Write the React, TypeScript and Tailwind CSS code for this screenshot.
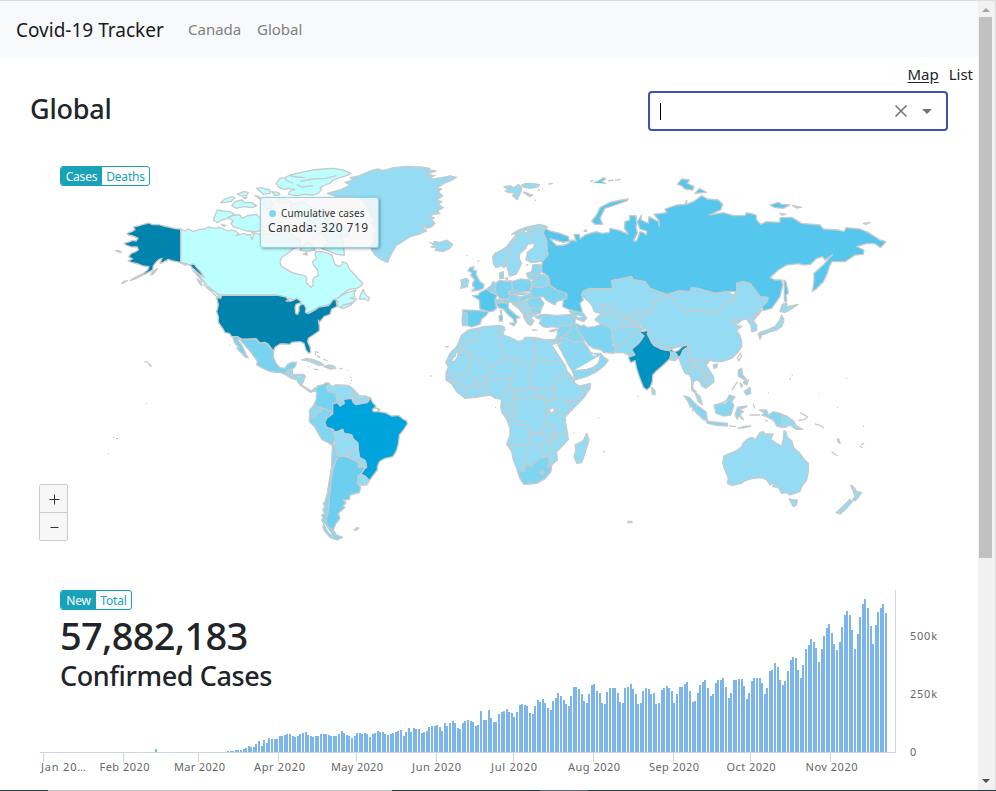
import React from "react";

const LIGHT = "#95dbf4";
const RUSSIA = "#55c7ee";
const CANADA = "#bdffff";
const USA = "#0084ae";

type Shape = [fill: string, d: string];
type Region = { name: string; x: number; y: number; shapes: Shape[] };

const regions: Region[] = [
  {
    name: "alaska-canada",
    x: 100,
    y: 155,
    shapes: [
      [CANADA, "M242 222L255 228 265 222 280 230 295 224 315 222 325 216 335 218 350 221 356 217 365 220 385 228 395 225 410 230 415 236 408 242 430 236 445 240 452 238 455 254 462 240 455 232 470 235 480 238 500 235 520 240 535 240 550 225 545 215 560 225 575 240 590 250 600 255 600 275 580 280 570 290 555 300 545 308 540 320 543 333 560 343 575 352 595 358 615 362 620 370 618 382 628 392 633 398 640 390 638 378 642 368 655 362 653 345 640 330 638 320 650 310 645 300 647 290 665 290 685 295 697 302 700 315 705 328 715 334 725 330 728 320 740 325 750 345 765 360 775 372 788 385 785 392 770 400 750 403 740 408 726 418 712 430 735 415 768 405 762 415 765 425 750 430 770 432 762 440 750 445 732 453 720 458 712 448 715 440 705 432 698 437 690 447 678 452 660 455 640 465 625 472 617 475 615 460 605 450 595 440 580 436 570 430 555 433 545 424 530 420 360 420 345 412 335 403 322 392 310 378 300 365 290 345 275 333 258 326 242 323Z"],
      [USA, "M81 235L97 229 105 224 100 216 118 212 130 208 146 204 158 209 175 208 190 213 210 217 225 221 242 222V323L262 327 258 331 240 322 215 317 205 313 196 318 190 322 180 325 186 310 176 314 168 322 160 332 158 345 145 352 125 362 105 372 90 377 110 365 130 355 143 345 147 335 130 333 115 327 95 322 84 318 98 312 86 305 94 295 105 291 115 285 112 276 95 276 78 270 72 265 90 260 98 256 108 258 114 250 100 243 85 240Z"],
      [USA, "M270 329L282 327 292 340 303 352 312 367 302 360 290 350 276 338Z"],
      ["#9ccbdc", "M46 288L56 287 64 292 56 291ZM65 386L72 379 82 377 73 382ZM152 360L158 350 172 340 168 348 158 358ZM276 346L284 352 295 358 303 372M292 372L300 378 306 392 298 384Z"],
      ["none", "M284 346L292 356 302 364M290 360L300 370 308 382M302 382L304 390M310 386L320 398 330 405"],
      [CANADA, "M322 398L345 410 362 428 350 425ZM352 165L345 180 340 195 352 203 365 195 385 190 402 177 390 170 370 168ZM383 188L400 180 420 180 425 190 440 183 455 180 470 178 485 195 490 225 465 230 440 228 420 222 400 215 393 205 400 198ZM362 143L375 132 395 125 405 128 395 138 380 142ZM395 152L405 140 425 135 435 143 455 143 470 152 455 158 430 155 410 160ZM412 118L430 110 445 112 440 122 425 123ZM470 100L485 98 510 105 510 115 490 118 478 108ZM515 110L535 112 540 118 525 122ZM465 122L478 125 480 132ZM365 208L378 212 370 214ZM430 128L441 127 437 131Z"],
    ],
  },
  {
    name: "north-atlantic",
    x: 250,
    y: 155,
    shapes: [
      [CANADA, "M78 85L90 70 105 68 120 60 140 55 165 50 190 45 220 42 250 40 280 45 303 55 290 62 270 68 250 75 240 85 225 90 210 98 215 103 205 115 190 120 165 118 140 122 115 118 120 108 135 103 115 100 105 104 88 98Z"],
      ["none", "M120 62L140 66 165 68M150 80L185 72 225 70 260 62M140 88L155 96 190 92M105 70L112 78 130 85"],
      [CANADA, "M120 150L160 140 190 160 220 170 250 195 275 215 300 225 290 245 270 240 280 260 283 300 260 298 240 290 215 280 235 265 230 250 215 235 190 225 170 215 150 200ZM150 285L160 270 175 262 190 275 195 285 170 289ZM160 298L170 292 172 300ZM30 130L60 128 70 150 50 165ZM80 130L110 134 125 142 90 145Z"],
      [LIGHT, "M232 115L250 110 270 105 285 98 300 90 285 82 310 75 300 68 330 62 360 48 385 42 400 47 430 38 470 34 510 36 540 40 530 44 558 48 530 58 555 62 540 66 550 72 575 68 600 63 620 67 600 78 585 84 575 90 560 100 575 102 565 110 578 123 560 135 575 140 565 148 580 158 562 168 570 176 550 178 540 185 553 188 545 195 555 205 545 215 530 220 515 208 520 218 530 228 505 238 480 245 455 262 440 270 428 290 418 310 413 322 395 315 375 300 365 285 362 270 372 255 370 240 380 225 365 205 375 195 360 180 355 160 345 145 330 130 300 125 260 125Z"],
      [LIGHT, "M540 262L548 268 552 260 572 262 590 255 608 268 600 280 578 290 555 285 560 277 543 276 555 270Z"],
      [CANADA, "M340 403L332 418 328 432 345 432 355 438 358 428 350 422 343 415ZM272 458L280 450 300 446 312 440 300 452 276 461Z"],
    ],
  },
  {
    name: "usa-caribbean",
    x: 200,
    y: 285,
    shapes: [
      [USA, "M50 38L62 40 65 31H235L258 36 265 44 258 48 275 48 290 40 304 50 298 55 288 58 285 68 287 85 293 88 297 78 297 64 305 57 313 60 318 70 316 82 325 86 345 75 358 66 385 62 392 55 398 45 408 43 410 58 412 64 395 72 390 88 372 95 358 112 355 105 358 125 358 137 340 150 325 160 323 170 330 185 332 202 326 205 318 195 312 175 300 170 275 172 270 178 258 177 240 177 225 187 221 198 213 190 205 178 193 172 180 175 170 163 125 163 112 155 95 155 88 145 75 143 68 130 55 112 55 95 50 80 55 60Z"],
      ["#7ad2f1", "M98 155H112L125 163 168 161 180 175 193 172 205 178 213 190 221 198 220 215 228 235 240 248 255 250 263 238 275 232 290 232 285 245 277 252 265 254 258 262 255 268 240 262 225 262 205 258 185 248 170 240 172 228 160 212 150 198 138 185 125 170 118 162 113 165 125 180 132 195 138 208 145 218 138 218 125 205 118 198 110 188 118 188 105 175Z"],
      [LIGHT, "M255 268L262 260 265 255 277 254 277 268 290 268 310 268 316 274 310 290 305 300 312 305 325 312 335 318 345 308 354 315 345 318 330 322 318 312 300 300 290 285 275 280ZM262 266L275 272M275 278L300 276 310 272M298 298L308 300M322 308L320 314"],
      ["#a5d9ea", "M305 225L320 220 340 224 360 232 372 240 355 241 340 234 320 226ZM372 245L385 240 400 242 408 250 390 252ZM386 241V252"],
      ["none", "M343 252L355 254M418 250L428 251M345 210L347 200 356 203M350 212L360 218M370 222L384 228M443 255L444 257M450 266L451 268M452 276L453 279M455 284L454 288M452 293L452 296M88 179L90 181M324 244L328 245"],
    ],
  },
  {
    name: "south-america",
    x: 290,
    y: 370,
    shapes: [
      ["#75d3f1", "M82 48L97 45 110 38 118 40 110 52 115 65 138 72 142 98 128 102V132L118 122 100 118 90 112 72 105 78 90 80 70 76 58Z"],
      ["#80d5f2", "M58 142L60 138 72 142 80 130 95 122 90 112 118 122 128 132 110 145 104 158 110 172 130 178 132 190 135 205 128 228 115 218 95 208 85 190 72 168 58 155Z"],
      ["#8cd9f3", "M72 105L90 112 95 122 80 130 72 142 60 138 58 122Z"],
      [LIGHT, "M110 52L118 40 122 46 130 50 135 45 150 45 175 46 188 55 186 65 192 72 185 85 170 90 160 88 163 100 150 108 142 98 138 72 115 65ZM188 55L200 68 208 78 205 90 210 100 198 104 190 98 192 72ZM208 78H228L232 98 210 100 205 90ZM228 78L242 84 235 98H232Z"],
      ["#00a4dc", "M128 132V102L142 98 150 108 163 100 160 88 185 85 190 98 198 104 232 98 242 84 248 98 258 108 250 118 256 114 270 118 265 125 285 128 305 138 325 136 340 148 350 152 352 162 340 180 328 195 325 222 318 245 308 260 285 265 268 275 262 290 262 300 248 318 238 332 225 318 212 312 222 298 230 292 228 280 225 272 208 262 205 240 203 218 190 208 185 195 162 190 158 178 145 184 132 186 130 178 110 172 104 158 110 145Z"],
      ["#fff", "M247 118L255 114 266 118 262 125 250 125Z"],
      [LIGHT, "M132 186L145 184 158 178 162 190 185 195 190 208 203 218 205 240H180L175 255 160 258 145 260 138 245 135 225 135 205ZM180 240H205L208 262 225 272 228 290 210 292 205 278 175 262V255ZM205 315L212 312 225 318 238 332 230 345H212L202 340Z"],
      ["#6ccfef", "M145 260L160 258 175 262 205 278 205 292H228L222 298 212 312 205 315 202 340 212 352 208 368 180 375 178 388 160 390 168 398 158 408 165 412 150 425 145 430 150 445 138 460 132 475 130 480 112 470 108 450 115 420 118 380 122 340 128 300 138 270Z"],
      ["#8cd5ee", "M128 228L135 225 138 245 145 260 138 270 128 300 122 340 118 380 115 420 108 450 112 470 130 480 140 495 158 502 140 510 120 502 105 485 98 470 102 462 95 450 100 444 95 435 105 430 98 418 105 412 100 400 105 395 112 370 118 330 125 290 126 250ZM100 455L105 470 115 488 130 500M128 482L138 498"],
      ["#a9cfdf", "M192 480L200 473 206 474 200 480Z"],
    ],
  },
  {
    name: "europe",
    x: 440,
    y: 165,
    shapes: [
      [LIGHT, "M192 65L210 62 222 68 235 58 245 68 243 80 232 104 218 92 225 84 205 82 195 78 205 74ZM245 60L255 56 270 55 298 58 295 65 270 70 250 66ZM250 82L262 84 270 88 278 90 270 95ZM284 105L288 107M294 75L300 76M306 72L310 73M325 57L338 56"],
      [LIGHT, "M158 275L165 265 185 255 200 245 215 225 232 205 215 208 235 195 265 185 300 178 322 185 318 190 300 187 285 200 265 195 245 198 232 210 222 225 215 245 205 258 203 275 200 300 192 308 185 302 168 308 160 295Z"],
      [LIGHT, "M203 275L205 258 215 245 222 225 232 210 245 198 262 205 275 210 278 235 262 238 258 250 240 265 237 280 245 295 238 310 228 328 208 333 200 300ZM262 205L265 195 285 200 300 187 315 190 310 205 320 225 322 260 325 268 308 288 275 293 258 285 262 262 280 248 285 238 278 235 275 210Z"],
      ["#62ccef", "M90 308L102 305 98 315 110 318 108 328 120 350 132 358 130 370 118 375 95 378 105 368 98 364 98 355 104 345 92 330 96 322 84 318Z"],
      [LIGHT, "M62 345L78 340 86 345 82 365 62 370 66 358ZM114 292L117 286M80 270L82 272"],
      ["#55c7ed", "M97 392L115 390 120 382 140 372 150 380 172 390 165 405 170 430 160 438 145 440 120 432 118 405Z"],
      ["#65cdef", "M68 435L120 437 145 440 140 450 125 462 120 478 95 486 82 482V445L68 443Z"],
      ["#8bd6f0", "M68 443L82 445V482H68L66 465ZM140 372L155 360 158 350 168 355 165 378 172 390 150 380Z"],
      ["#78d2f0", "M168 355L180 345 190 348 215 348 218 375 205 385 215 395 205 402H180L172 390 165 378Z"],
      ["#8bd8f2", "M178 325L190 320V340H180ZM195 340L204 338 202 344ZM260 325L275 320 278 300 300 298 305 320 295 330 285 342H270L262 335ZM262 325L290 330M258 300L265 300M285 342L295 330 310 328 325 340 328 360 305 368 278 365 275 350Z"],
      ["#7dd4f1", "M215 350L240 342 270 345 275 360 270 378 240 382 218 375ZM278 365L305 368 328 360 350 375 380 385V400L350 410 345 420 330 412 318 405 310 395 275 398 270 380Z"],
      ["#84d6f1", "M205 380L225 375 242 382 225 392 212 388ZM180 402H205L212 390 240 384 270 385 275 398 262 402 240 412 215 412 190 412ZM225 392L240 396 270 388M238 395L235 412M165 405L188 402 185 412 168 415ZM258 410L275 398H300L312 415 305 430 270 428ZM270 428L305 430 300 445H275Z"],
      [LIGHT, "M215 412H240L258 408 270 428 275 445 262 452 256 462 250 448 235 430 218 418ZM225 418L245 420 248 445M245 430L265 432M250 448L268 445M250 455L275 448H290L272 458 282 468 272 482 262 475ZM262 474L278 470M275 495L292 496M328 498L350 492 342 500Z"],
      ["#66ccee", "M168 415L190 412 205 415 205 430 225 448 240 458 228 460 230 470 225 478 220 462 205 450 190 432 175 428ZM208 475L225 473 222 483ZM178 452L187 450V468H178ZM180 438L185 436 184 448Z"],
      ["#8cd7f1", "M295 455L300 450 320 448 350 452 390 448 405 460V478L370 482 355 488 340 485 320 487 310 485 298 475 303 465ZM295 462L285 455 298 450ZM388 438L430 445 440 460 430 470 405 460ZM405 450L415 460 430 455"],
    ],
  },
  {
    name: "africa-middle-east",
    x: 430,
    y: 310,
    shapes: [
      [LIGHT, "M122 58L140 55 160 50 208 46 222 50 225 60 218 68 222 75 240 82 265 95 280 90 285 82 312 82 345 90 372 88 378 100 365 105 385 135 405 165 412 185 430 205 435 220 450 228 482 220 480 235 460 265 440 285 418 308 405 322 408 345 412 368 415 388 400 405 380 425 382 450 365 465 362 485 345 505 320 520 282 523 270 505 262 480 250 450 245 425 230 402 240 375V355L230 328 215 305 212 288 215 268 195 265 182 255 160 258 140 262 105 265 80 245 65 222 48 210V190L55 170 47 158 60 130 80 110 95 75 112 62Z"],
      ["#7fd4f0", "M262 480L282 485 288 462 300 470 330 445 355 440 358 460 365 465 362 485 345 505 320 520 282 523 270 505Z"],
      ["none", "M98 118V102L140 88 147 68 140 55M98 105L80 108M98 118L112 125 180 172 190 168 222 145 215 110 205 80 208 46M215 85L222 75M115 130L118 190 75 200 48 190M60 155L75 140 80 122H98M180 172L182 190 165 205M222 145H250L258 148 305 168M314 82V152H390M314 152L312 165 305 168 300 205 305 232M258 148L250 190 242 210 245 235 250 245 285 238 305 232M180 210L230 205 242 210M240 222L225 245 212 262M172 212L175 235 182 255M160 222L165 258M140 225L138 262M182 190L165 200 140 205 130 225 105 232 90 215 75 218 48 205M105 232L105 265M75 235L95 228M48 212H70M135 222H160L172 212M305 225L320 235 350 238 375 235 372 215 385 198 400 195 430 215M372 220L370 245 380 265 405 272 440 268 470 235 450 228M440 268L418 275V308M370 297L405 322M345 300L350 275 375 268M250 272L265 265 285 265 320 262 350 272 345 300 345 320 350 345 340 350V372L325 368 295 365V345H265L262 332 235 330M215 283H245L250 272 245 245M245 283L248 310 230 318M262 268L258 320 238 322M295 345L298 405H230M298 405L330 408 355 390 375 385 370 365 375 350 350 345M290 410L288 462M282 485L285 462M325 408L345 440 358 440 365 410 355 390M375 370L412 368M372 365L383 395 376 390M285 238L265 245 250 268M305 232L325 258 350 265 375 260M298 365L298 380 325 368M355 390V375L340 372M230 290V308H215M345 300L350 320"],
      ["#fff", "M358 298L372 292V305L362 310ZM65 155L68 145 75 140 78 128 98 122 98 125 85 128 82 142 72 155Z"],
      [LIGHT, "M330 487L337 480 344 487 337 494ZM352 465L358 460 362 468 356 472ZM435 405L460 392 470 370 477 390 465 430 455 458 440 460 432 440 438 420Z"],
      ["#8ad8f2", "M380 90L405 82 430 95H460L472 110 480 125 488 130 512 130 520 140 535 150 525 165 500 185 470 200 435 210 428 185 415 165 395 125 385 108ZM430 182L470 178 490 172 505 160 512 135M490 172L498 185M378 108L388 105 400 92M480 125L488 138 505 140"],
      ["#88d7f1", "M382 60L390 48 415 46 440 42 442 58 450 70 460 85 462 96H430L405 82 380 90 378 100 374 92 382 75ZM425 48L418 68 390 82"],
      ["#7fd5f1", "M440 42L455 48 462 45 470 52 495 50 515 42 540 48 548 65 545 80 550 100 558 118 550 130 520 127 515 120 490 115 475 105 468 95 460 85 450 70 442 58Z"],
      ["#a9cfdf", "M45 110L57 111M0 198H5M195 292L198 293M507 322V325M430 368L433 369M520 424L523 426"],
    ],
  },
  {
    name: "russia-east-asia",
    x: 590,
    y: 165,
    shapes: [
      [RUSSIA, "M-135 190L-120 198-90 205-65 215-62 228-80 232-105 225-120 220-110 232-100 242-75 240-65 235-55 225-42 228-48 208-32 208-30 222-15 210 0 205 20 200 35 205 58 203 60 190 90 197 115 208 103 190 105 170 120 165 118 152 138 152 140 175 138 185 142 205 130 228 140 228 150 200 158 202 170 210 170 198 150 192 142 170 155 150 153 165 175 175 177 155 190 162 205 170 208 184 207 166 192 148 230 143 225 132 260 120 285 118 290 106 290 118 310 110 335 92 352 102 385 105 398 118 392 135 380 140 358 150 400 143 430 152 465 152 470 143 498 150 500 165 512 178 530 170 570 172V158L605 157 635 175 690 180 700 192 745 195 762 200 768 188 810 192 835 203 870 225 888 230 872 248 855 236 830 235 800 245 822 255 820 268 795 270 765 290 725 290 718 305 712 325 700 350 678 372 667 379 672 350V325L700 300 728 268 705 285 698 275 680 280 662 298 640 300 625 296 590 300 565 315 540 338 555 345 575 345 578 360 570 395 545 430 520 437 515 425 530 412 535 398 510 395 495 375 480 355 460 350 440 355V380L410 380 375 385 330 372 305 368 300 380 265 378 232 388 205 380 180 370 165 350 130 345 125 335 65 347 68 372 40 372 0 370-20 378-25 390-20 405-30 415-22 445-40 440-60 435-82 425-80 405-70 400V385L-100 375-120 360-122 345-125 335-145 320V300L-142 288-125 268-128 260-130 225-140 205Z"],
      [RUSSIA, "M5 168L20 150 30 128 60 112 95 105 115 102 110 108 75 120 45 130 35 150 30 160 38 178 15 178ZM262 58L275 42 298 45 292 55 312 65 308 75 285 72 275 62ZM315 85L328 70 350 82ZM540 120L565 112 575 118 600 120 580 130 555 128ZM608 122L635 127 620 129ZM570 145L588 148 575 150ZM820 175L840 172 828 178ZM582 345L588 350 595 385 588 390 590 408 583 408V380ZM-10 200L-18 198-14 194ZM0 50L10 46M10 53L25 48 40 38 48 42 35 50 48 56M55 48L70 45M75 46L92 43M584 418L588 412 592 420"],
      [LIGHT, "M-25 390L-20 378 0 372 40 372 68 372 65 347 125 335 130 345 165 350 180 370 205 380 232 388 225 397 190 405V430L180 442 140 440 118 452 105 460 85 440 62 435 60 425 35 420 32 445 12 440 8 425 -2 412-10 405Z"],
      [LIGHT, "M232 388L265 378 300 380 305 368 330 372 375 385 410 380 430 390 440 405 415 410 400 425 375 445H345L290 438 260 420 255 405Z"],
      [LIGHT, "M232 388L255 405 260 420 290 438H345L375 445 400 425 415 410 440 405 430 390 440 380V355L460 350 480 355 495 375 510 395 535 398 530 412 515 425 510 440 475 460 455 465 445 475 430 470 445 460 428 467 440 480 455 485 440 495 450 512 455 530 455 545 442 565 425 580 395 590 375 590 360 585 350 583 320 590 300 580 292 560 298 545 275 543 240 552 220 550 190 535 180 528 178 513 170 495 150 480 135 470 150 455 180 442 190 430V405L225 397Z"],
      [LIGHT, "M470 462L490 455 510 440 515 437 500 455 490 468 500 480V497L485 500 482 480 475 470ZM480 472L495 470M575 422L582 415 592 425 625 418 600 435 585 442 570 440ZM575 450L582 465 575 485 560 495 535 502 515 510 508 503 530 495 555 485 570 465ZM505 505L515 512 510 523ZM522 508L535 503"],
    ],
  },
  {
    name: "south-asia-oceania",
    x: 600,
    y: 300,
    shapes: [
      [LIGHT, "M-15 60L-5 48 0 45 12 42 35 45 60 60 75 78 65 80 35 90 25 78 0 70ZM5 15L30 20 32 30 55 35 75 55 85 58 95 62 90 82 75 78 60 60 35 45 12 42 2 40ZM75 55L90 45 110 35 150 37 130 52 105 65 90 60ZM95 62L105 65 115 72 120 85 90 82ZM82 52L100 50 108 56"],
      ["#90daf3", "M35 90L65 80 90 82 115 80 100 98 85 115 60 140 38 135V110ZM38 135L60 140 85 115 100 98 115 80 135 85 125 92 120 100 132 108 118 128 95 148 105 165 90 172 85 165 70 158H40L48 145Z"],
      ["#0092c1", "M118 95L145 92 142 102 150 118 155 128 165 138 190 148 210 152 212 145 222 155 235 152 248 138 265 135 262 142 250 150 242 168 235 172 228 160 215 158 208 178 190 195 170 212 158 225 157 245 150 262 140 270 130 262 118 230 110 205 105 182 92 188 85 172 105 165 95 148 118 128 132 108Z"],
      [LIGHT, "M158 122L180 132 208 145V152L185 148 160 135ZM212 155L228 160 232 175 225 182 212 180ZM155 262L165 272V284L157 284ZM235 172L242 168 250 150 265 142 270 175 285 185 272 205 278 240 268 225 255 220 248 205Z"],
      [LIGHT, "M270 178L285 190 300 182 320 178 330 182 318 195 340 228 342 245 318 265 305 258 300 245 290 240 280 245 278 262 285 275 300 290 308 315 295 305 285 278 275 270V245L270 215ZM285 190L295 200 310 205 325 235M272 205L285 198M285 205L305 215 328 235 300 235M300 240L328 236 320 250M278 268L290 275"],
      ["#8bd7f1", "M340 195L352 192 350 203 342 205ZM415 210L425 205 428 225 440 240 430 238 415 228ZM430 245L445 240 440 255 432 250ZM420 248L428 256 424 262ZM432 275L442 268 450 262 452 280 440 285ZM395 270L404 258 412 245"],
      ["#fff", "M412 172L422 160 424 170 416 183Z"],
      ["#84d7f2", "M252 288L268 292 290 315 318 335 322 358 312 360 290 340 275 320 262 302ZM318 362L335 365 360 368 382 370V378L350 376 322 370ZM342 315L362 312 380 300 388 285 405 290 395 305 402 315 392 345 370 348 348 340ZM342 316L375 310 388 298 404 292M412 322L440 318 438 322 418 328 430 335 420 342 430 358 424 356 418 345 412 358 405 345 410 330ZM388 378L408 380M412 386L430 380 452 378 425 385M478 330L500 330 505 345 520 335 545 342V382L530 378 522 362 505 352 485 345 495 340ZM266 310L272 324M276 328L280 334"],
      [LIGHT, "M545 342L560 348 580 362 590 378 608 388 590 388 570 375 555 382H545Z"],
      ["none", "M595 362L615 358 622 350 600 338M645 372L660 376 672 385M712 418L716 416 720 430 715 428ZM695 455L712 468M778 438L788 443M783 434L793 429M460 312L464 325M448 345L480 345M495 362L503 363M84 664H96V668H84ZM112 289L116 290M9 455L13 456M568 238L571 239M575 226L578 227M504 277L506 278M655 280L657 281"],
      [LIGHT, "M372 468L385 462 410 452 425 440 430 428 445 415 458 412 465 420 475 405 480 397 490 395 495 402 520 402 512 418 530 430 545 438 550 415 552 392 558 395 562 412 575 422 582 445 600 460 612 478 625 490V515L620 540 605 560 600 575 585 580 570 585 560 578 545 580 535 562 518 560 525 545 510 555 500 540 485 533 460 535 435 542 425 550 395 556 382 550 385 535 375 510 368 490ZM567 597L580 600 592 600 590 615 580 620ZM752 555L762 562 770 575 785 577 775 592 765 603 758 600 765 588ZM750 598L757 605 740 625 720 642 708 638 730 618Z"],
    ],
  },
];

function WorldMap() {
  return (
    <svg className="block h-[400px] w-[918px]" viewBox="30 155 918 400">
      {regions.map((r) => (
        <g key={r.name} transform={`translate(${r.x} ${r.y}) scale(.333333)`} stroke="#c6cacb" strokeWidth="3.9" strokeLinejoin="round">
          {r.shapes.map(([fill, d], i) => (
            <path key={i} fill={fill} d={d} />
          ))}
        </g>
      ))}
      <g fill="#b5c5cc">
        <path d="M145 361l3 1 4 4-2 1-2-4-4-1z" />
        <path d="M146 403h1v1h-1zM113 437h1v1h-1zM116 438h2v1h-2zM108 453h1v1h-1zM790 378h1v1h-1zM846 378h1v1h-1zM837 407h1v1h-1zM863 426h1v1h-1z" />
      </g>
    </svg>
  );
}

// Bar heights in thirds of a pixel, one per day from 12 March
const daily = [
  3, 3, 3, 6, 6, 6, 8, 11, 18, 15, 15, 24, 33, 18, 36, 27, 42, 39, 39, 39, 48, 48, 51, 54, 54, 48, 45, 48, 54, 57, 60, 51, 48, 45, 48, 48, 54, 54, 54, 51, 48, 48, 48, 54, 63, 57, 51, 48, 42, 48, 57, 57, 54, 57, 54, 45, 54, 57, 63, 60, 60, 54, 51, 54, 57, 60, 63,
  66, 48, 60, 72, 60, 72, 69, 69, 57, 60, 63, 75, 78, 78, 81, 75, 63, 87, 78, 87, 93, 87, 72, 69, 87, 93, 96, 93, 90, 78, 81, 123, 96, 96, 126, 102, 90, 90, 114, 120, 123, 129, 120, 117, 105, 120, 141, 144, 141, 138, 117, 114, 138, 156, 150, 159, 147, 132, 126, 153, 162, 177, 168, 156, 144, 138, 168, 195, 195, 189, 174, 153, 147, 174, 201, 204, 183, 177, 147, 144, 180, 192, 192, 192, 177, 150, 147, 192, 195, 204, 189, 174, 144, 147, 183, 192, 189, 174, 177, 144, 147, 186, 192, 198, 192, 183, 147, 174, 195, 195, 204, 210, 183, 150, 153, 177, 201, 210, 216, 192, 168, 174, 207, 216, 216, 222, 195, 162, 177, 216, 216, 219, 219, 198, 159, 177, 213, 222, 222, 222, 207, 174, 192, 243, 246, 267, 255, 216, 201, 213, 243, 276, 285, 282, 246, 222, 261, 309, 321, 339, 330, 312, 270, 309, 348, 372, 384, 357, 324, 306, 330, 375, 411, 423, 411, 366, 309, 354, 405, 444, 459, 432, 378, 324, 381, 420, 432, 444, 417,
];

const months: [string, number, number, number][] = [
  ["Jan 20…", 43, 41, 45],
  ["Feb 2020", 123, 99.5, 50],
  ["Mar 2020", 198, 174, 51],
  ["Apr 2020", 278, 254, 51],
  ["May 2020", 356, 331, 52],
  ["Jun 2020", 436, 412, 49],
  ["Jul 2020", 513, 491, 46],
  ["Aug 2020", 593, 568, 52],
  ["Sep 2020", 673, 649, 50],
  ["Oct 2020", 750, 726.5, 49],
  ["Nov 2020", 830, 805.5, 52],
];

function CasesChart() {
  return (
    <svg className="block h-[200px] w-[918px] font-['Noto_Sans','Open_Sans',sans-serif]" viewBox="30 585 918 200">
      <g fill="#7cb5ec" shapeRendering="crispEdges">
        <rect x="155" y="749" width="2" height="3" />
        {daily.map((h, i) => (
          <rect key={i} x={Math.round(885 - (daily.length - 1 - i) * 2.58)} y={752 - h / 3} width="2" height={h / 3} />
        ))}
      </g>
      <path d={"M40 752.5H895.5V590" + months.map((m) => `M${m[1] + 0.5} 752v10`).join("")} stroke="#ccd6eb" fill="none" shapeRendering="crispEdges" />
      <g fill="#666" fontSize="11">
        {months.map(([label, , x, w]) => (
          <text key={label} x={x} y="771" textLength={w}>{label}</text>
        ))}
        <text x="910" y="640" textLength="27">500k</text>
        <text x="910" y="698" textLength="27">250k</text>
        <text x="910" y="756">0</text>
      </g>
    </svg>
  );
}

function Toggle({ on, off, wide }: { on: string; off: string; wide?: boolean }) {
  return (
    <div className={`flex h-5 overflow-hidden rounded-[3px] border border-[#17a2b8] text-[12px] leading-[19px] tracking-[-0.2px] ${wide ? "w-[90px]" : "w-[72px]"}`}>
      <button className={`bg-[#17a2b8] text-center text-white ${wide ? "w-[41px]" : "w-[35px]"}`}>{on}</button>
      <button className="flex-1 text-center text-[#17a2b8]">{off}</button>
    </div>
  );
}

function ScrollBar() {
  return (
    <div className="flex w-[18px] shrink-0 flex-col items-center border-r border-[#dcdcdc] bg-[#f1f1f1] pr-0.5">
      <svg className="h-4 w-4" viewBox="0 0 16 16"><path d="M4 11l4-4 4 4z" fill="#a3a3a3" /></svg>
      <div className="h-[541px] w-[13px] bg-[#c1c1c1]" />
      <svg className="mt-auto h-[18px] w-4" viewBox="0 0 16 18"><path d="M4 7h8l-4 4z" fill="#505050" /></svg>
    </div>
  );
}

export default function App() {
  return (
    <div className="flex h-[791px] w-[996px] flex-col overflow-hidden bg-white font-['Noto_Sans','Open_Sans',sans-serif] text-[#212529]">
      <div className="flex h-[790px] border-t border-[#dadce0]">
        <main className="w-[978px]">
          <nav className="flex h-14 items-center bg-[#f8f9fa] pt-0.5 pl-4">
            <a className="w-[172px] text-[19px] whitespace-nowrap text-[#1a1a1a]">Covid-19 Tracker</a>
            <a className="-mt-0.5 w-[69px] text-[15px] text-[#808080]">Canada</a>
            <a className="-mt-0.5 text-[15px] text-[#808080]">Global</a>
          </nav>
          <div className="flex h-[35px] items-center justify-end gap-[10px] pr-[5px] text-[15px]">
            <a className="underline underline-offset-2">Map</a>
            <a>List</a>
          </div>
          <div className="flex h-[63px] justify-between pr-[30px] pl-[30px]">
            <h1 className="-mt-[3px] text-[27px] leading-10 font-[550] tracking-[-0.2px]">Global</h1>
            <div className="-mt-px flex h-10 w-[300px] items-center rounded-[4px] border-2 border-[#3f51b5] pl-[10px]">
              <div className="h-[17px] w-px bg-black" />
              <svg className="ml-auto h-5 w-5" viewBox="0 0 20 20"><path d="M4.5 4.5l11 11m0-11l-11 11" stroke="#757575" strokeWidth="1.6" /></svg>
              <svg className="mr-[9px] ml-1.5 h-5 w-5" viewBox="0 0 20 20"><path d="M5 8h10l-5 5z" fill="#757575" /></svg>
            </div>
          </div>
          <section className="relative h-[400px] pl-[30px]">
            <WorldMap />
            <div className="absolute top-[11px] left-[60px]"><Toggle on="Cases" off="Deaths" wide /></div>
            <div className="absolute top-[42px] left-[260px] h-[51px] w-[119px] rounded-[3px] border border-[#8cd3ee] bg-[#f7f7f7]/85 pt-[7px] pl-[7px] text-[#333] shadow-[1px_1px_3px_rgba(0,0,0,.35)]">
              <div className="flex items-center gap-[5px] text-[10px] leading-4 tracking-[0.15px] whitespace-nowrap">
                <span className="ml-px h-[7px] w-[7px] rounded-full bg-[#80d6f5]" />Cumulative cases
              </div>
              <div className="text-[12px] leading-[13px] tracking-[0.5px] whitespace-nowrap">Canada: 320 719</div>
            </div>
            <div className="absolute top-[329px] left-[39px] flex h-[57px] w-[29px] flex-col rounded-[2px] border border-[#ccc] bg-[#f7f7f7]">
              {["M5 10h10M10 5v10", "M6 10h8"].map((d, i) => (
                <button key={d} className={`flex flex-1 items-center justify-center ${i === 0 ? "border-b border-[#ccc]" : ""}`}>
                  <svg className="h-5 w-5" viewBox="0 0 20 20"><path d={d} transform="translate(.5 .5)" stroke="#333" strokeWidth="1" fill="none" /></svg>
                </button>
              ))}
            </div>
          </section>
          <section className="relative mt-[30px] h-[200px] pl-[30px]">
            <CasesChart />
            <div className="absolute top-[5px] left-[60px]">
              <Toggle on="New" off="Total" />
              <div className="mt-[1px] text-[38px] leading-[48px] font-[550] tracking-[-0.7px] whitespace-nowrap">57,882,183</div>
              <div className="text-[27px] leading-[34px] font-[550] tracking-[-0.4px] whitespace-nowrap">Confirmed Cases</div>
            </div>
          </section>
        </main>
        <ScrollBar />
      </div>
      <div className="flex h-px bg-[#263b44]">
        <div className="ml-12 w-[344px] bg-[#c1c1c1]" />
        <div className="ml-[148px] w-12 bg-[#5a676d]" />
      </div>
    </div>
  );
}
